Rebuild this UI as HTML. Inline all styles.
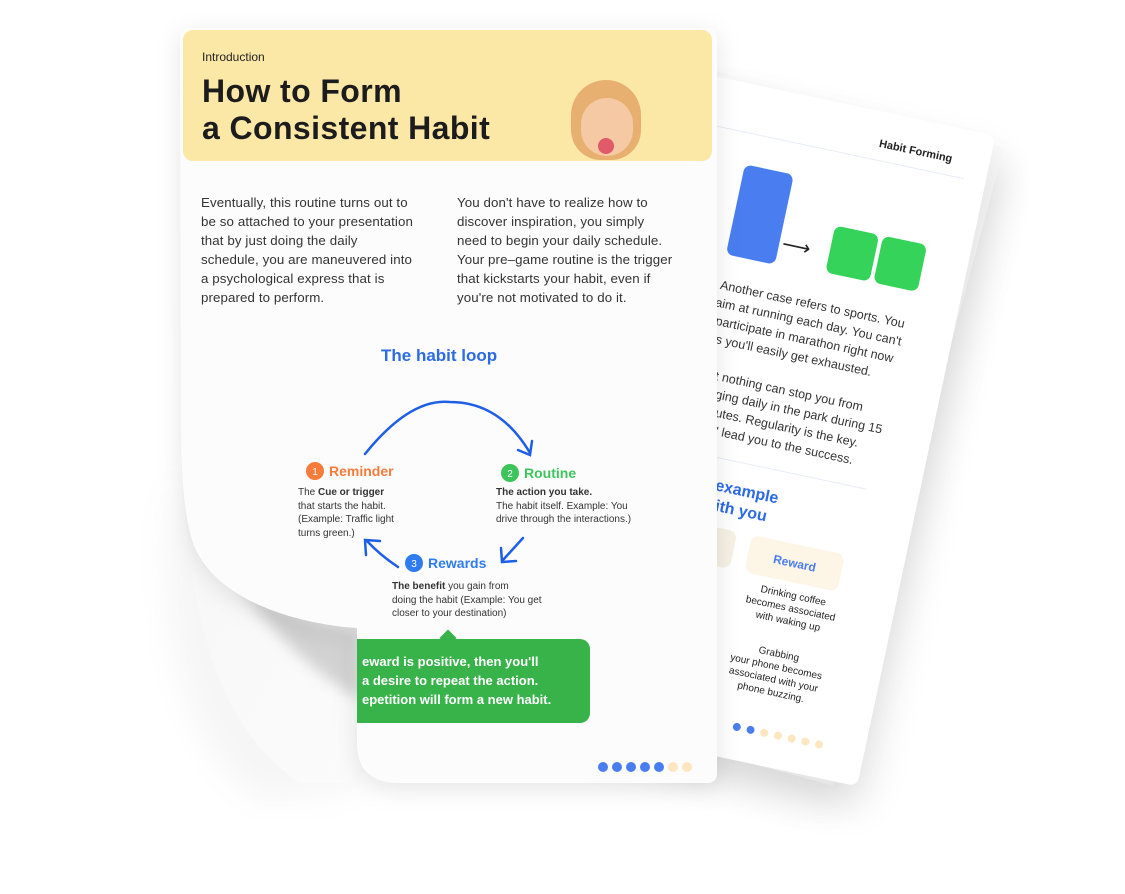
<!DOCTYPE html>
<html><head><style>
body{margin:0;width:1125px;height:894px;background:#fff;position:relative;overflow:hidden;font-family:"Liberation Sans",sans-serif;color:#222}
.back{position:absolute;left:700px;top:73px;width:302px;height:665px;background:#fff;transform:rotate(12deg);transform-origin:0 0;box-shadow:10px 20px 40px rgba(0,0,0,.10);border-radius:8px;}
.back2{position:absolute;left:712px;top:70px;width:302px;height:660px;background:#fbfbfb;transform:rotate(15deg);transform-origin:0 0;box-shadow:10px 20px 40px rgba(0,0,0,.07);}
.b{position:absolute;white-space:nowrap}
.bt{position:absolute;white-space:nowrap;font-size:12.5px;color:#333}
.fw{position:absolute;left:180px;top:28px;width:537px;height:755px;filter:drop-shadow(0 6px 12px rgba(0,0,0,.10))}
.front{position:absolute;left:0;top:0;width:537px;height:755px;background:#fcfcfc;clip-path:path("M0 10 Q0 0 10 0 H527 Q537 0 537 10 V745 Q537 755 527 755 H215 Q177 753 177 715 V600 C120 596 40 575 15 520 C5 495 2 460 1 410 Z")}
.hdr{position:absolute;left:3px;top:2px;width:529px;height:131px;background:#fbe7a6;border-radius:10px}
.p{position:absolute;font-size:13.3px;line-height:19px;color:#333;white-space:nowrap;letter-spacing:.1px}
.lab{position:absolute;font-size:10px;line-height:13.5px;color:#333;white-space:nowrap}
.dot{display:inline-block;width:10px;height:10px;border-radius:5px;margin-right:4px}
.sd{display:inline-block;width:8px;height:8px;border-radius:4px;margin-right:6px}
</style></head><body>
<div class="back2"></div>
<div class="back">
 <div class="b" style="left:190px;top:26px;font-size:11px;font-weight:bold">Habit Forming</div>
 <div style="position:absolute;left:0;top:48px;width:280px;height:1px;background:#e8ecf8"></div>
 <div style="position:absolute;left:63px;top:80px;width:50px;height:92px;background:#4a7ef0;border-radius:7px"></div>
 <div class="b" style="left:116px;top:137px;font-size:20px">⟶</div>
 <div style="position:absolute;left:164px;top:121px;width:45px;height:48px;background:#35d35a;border-radius:7px"></div>
 <div style="position:absolute;left:213px;top:121px;width:45px;height:48px;background:#35d35a;border-radius:7px"></div>
 <div class="bt" style="left:64px;top:196px">Another case refers to sports. You</div>
 <div class="bt" style="left:63px;top:214px">aim at running each day. You can't</div>
 <div class="bt" style="left:67px;top:232px">participate in marathon right now</div>
 <div class="bt" style="left:71px;top:250px">s you'll easily get exhausted.</div>
 <div class="bt" style="left:78px;top:286px">t nothing can stop you from</div>
 <div class="bt" style="left:82px;top:304px">ging daily in the park during 15</div>
 <div class="bt" style="left:86px;top:322px">utes. Regularity is the key.</div>
 <div class="bt" style="left:90px;top:340px">' lead you to the success.</div>
 <div style="position:absolute;left:0;top:372px;width:250px;height:1px;background:#e8ecf8"></div>
 <div class="b" style="left:101px;top:392px;font-size:16px;font-weight:bold;color:#2c6ae6">example</div>
 <div class="b" style="left:105px;top:412px;font-size:16px;font-weight:bold;color:#2c6ae6">ith you</div>
 <div style="position:absolute;left:37px;top:441px;width:95px;height:38px;background:#f6f1e4;border-radius:8px;color:#35b34a;font-size:12px;font-weight:bold;text-align:center;line-height:38px">Routine</div>
 <div style="position:absolute;left:147px;top:441px;width:95px;height:38px;background:#fdf5e6;border-radius:8px;color:#4a7ef0;font-size:12px;font-weight:bold;text-align:center;line-height:38px">Reward</div>
 <div class="b" style="left:150px;top:486px;width:100px;font-size:10px;line-height:13px;text-align:center">Drinking coffee<br>becomes associated<br>with waking up</div>
 <div class="b" style="left:148px;top:546px;width:100px;font-size:10px;line-height:13px;text-align:center">Grabbing<br>your phone becomes<br>associated with your<br>phone buzzing.</div>
 <div class="b" style="left:168px;top:623px"><span class="sd" style="background:#4a7ef0"></span><span class="sd" style="background:#4a7ef0"></span><span class="sd" style="background:#fde6c0"></span><span class="sd" style="background:#fde6c0"></span><span class="sd" style="background:#fde6c0"></span><span class="sd" style="background:#fde6c0"></span><span class="sd" style="background:#fde6c0"></span></div>
</div>
<svg style="position:absolute;left:0;top:0" width="1125" height="894">
 <defs><filter id="bl" x="-50%" y="-50%" width="200%" height="200%"><feGaussianBlur stdDeviation="16"/></filter>
 <filter id="bl2" x="-50%" y="-50%" width="200%" height="200%"><feGaussianBlur stdDeviation="7"/></filter>
 <linearGradient id="fl" x1="0" y1="0" x2="1" y2="1"><stop offset="0" stop-color="#f7f7f7"/><stop offset="1" stop-color="#fbfbfb"/></linearGradient></defs>
 <path d="M175 470 C190 600 300 640 360 650 L360 790 L260 800 C170 740 160 600 170 490 Z" fill="rgba(0,0,0,.035)" filter="url(#bl)"/>
 <path d="M181 440 C190 560 260 615 360 628 L360 783 L300 783 C220 730 185 620 181 440 Z" fill="url(#fl)"/>
 <path d="M235 580 C280 612 320 625 360 630 L360 700 C310 670 270 630 235 580 Z" fill="rgba(0,0,0,.16)" filter="url(#bl2)"/>
</svg>
<div class="fw"><div class="front">
 <div class="hdr">
  <div class="b" style="left:19px;top:20px;font-size:12px">Introduction</div>
  <div class="b" style="left:19px;top:43px;font-size:32px;line-height:37px;font-weight:bold;color:#1c1c1c;letter-spacing:.4px">How to Form<br>a Consistent Habit</div>
  <div style="position:absolute;left:388px;top:50px;width:70px;height:80px;border-radius:35px 35px 30px 30px;background:#e8b070"></div>
  <div style="position:absolute;left:398px;top:68px;width:52px;height:58px;border-radius:26px;background:#f5c9a4"></div>
  <div style="position:absolute;left:415px;top:108px;width:16px;height:16px;border-radius:8px;background:#e05a6a"></div>
 </div>
 <div class="p" style="left:21px;top:165px">Eventually, this routine turns out to<br>be so attached to your presentation<br>that by just doing the daily<br>schedule, you are maneuvered into<br>a psychological express that is<br>prepared to perform.</div>
 <div class="p" style="left:277px;top:165px">You don't have to realize how to<br>discover inspiration, you simply<br>need to begin your daily schedule.<br>Your pre–game routine is the trigger<br>that kickstarts your habit, even if<br>you're not motivated to do it.</div>
 <div class="b" style="left:201px;top:318px;font-size:17px;font-weight:bold;color:#2c6ae6">The habit loop</div>
 <div style="position:absolute;left:170px;top:611px;width:240px;height:84px;background:#37b34a;border-radius:0 10px 10px 0"></div>
 <div style="position:absolute;left:262px;top:604px;width:12px;height:12px;background:#37b34a;transform:rotate(45deg)"></div>
 <div class="b" style="left:182px;top:624px;font-size:13px;line-height:19px;color:#fff;font-weight:bold">eward is positive, then you'll<br>a desire to repeat the action.<br>epetition will form a new habit.</div>
 <svg style="position:absolute;left:0;top:0" width="537" height="755">
  <g fill="none" stroke="#1f5fe6" stroke-width="2.5" stroke-linecap="round">
   <path d="M185 426 Q230 370 270 374 Q320 374 350 425"/><path d="M338 422 L350 427 L352 413"/>
   <path d="M343 510 L323 532"/><path d="M321 520 L322 534 L336 533"/>
   <path d="M218 539 Q200 527 187 513"/><path d="M186 527 L185 512 L200 513"/>
  </g>
  <circle cx="135" cy="443" r="9" fill="#f77b3a"/><text x="135" y="447" fill="#fff" font-size="10" text-anchor="middle" font-family="Liberation Sans">1</text>
  <circle cx="330" cy="445" r="9" fill="#3dc55c"/><text x="330" y="449" fill="#fff" font-size="10" text-anchor="middle" font-family="Liberation Sans">2</text>
  <circle cx="234" cy="535" r="9" fill="#2f7cf0"/><text x="234" y="539" fill="#fff" font-size="10" text-anchor="middle" font-family="Liberation Sans">3</text>
 </svg>
 <div class="b" style="left:149px;top:435px;font-size:14px;color:#f77b3a;font-weight:bold">Reminder</div>
 <div class="b" style="left:344px;top:437px;font-size:14px;color:#3dc55c;font-weight:bold">Routine</div>
 <div class="b" style="left:248px;top:527px;font-size:14px;color:#2f7cf0;font-weight:bold">Rewards</div>
 <div class="lab" style="left:118px;top:458px">The <b>Cue or trigger</b><br>that starts the habit.<br>(Example: Traffic light<br>turns green.)</div>
 <div class="lab" style="left:316px;top:458px"><b>The action you take.</b><br>The habit itself. Example: You<br>drive through the interactions.)</div>
 <div class="lab" style="left:212px;top:552px"><b>The benefit</b> you gain from<br>doing the habit (Example: You get<br>closer to your destination)</div>
 <div class="b" style="left:418px;top:731px"><span class="dot" style="background:#4a7ef0"></span><span class="dot" style="background:#4a7ef0"></span><span class="dot" style="background:#4a7ef0"></span><span class="dot" style="background:#4a7ef0"></span><span class="dot" style="background:#4a7ef0"></span><span class="dot" style="background:#fde6c0"></span><span class="dot" style="background:#fde6c0"></span></div>
</div></div>
</body></html>
